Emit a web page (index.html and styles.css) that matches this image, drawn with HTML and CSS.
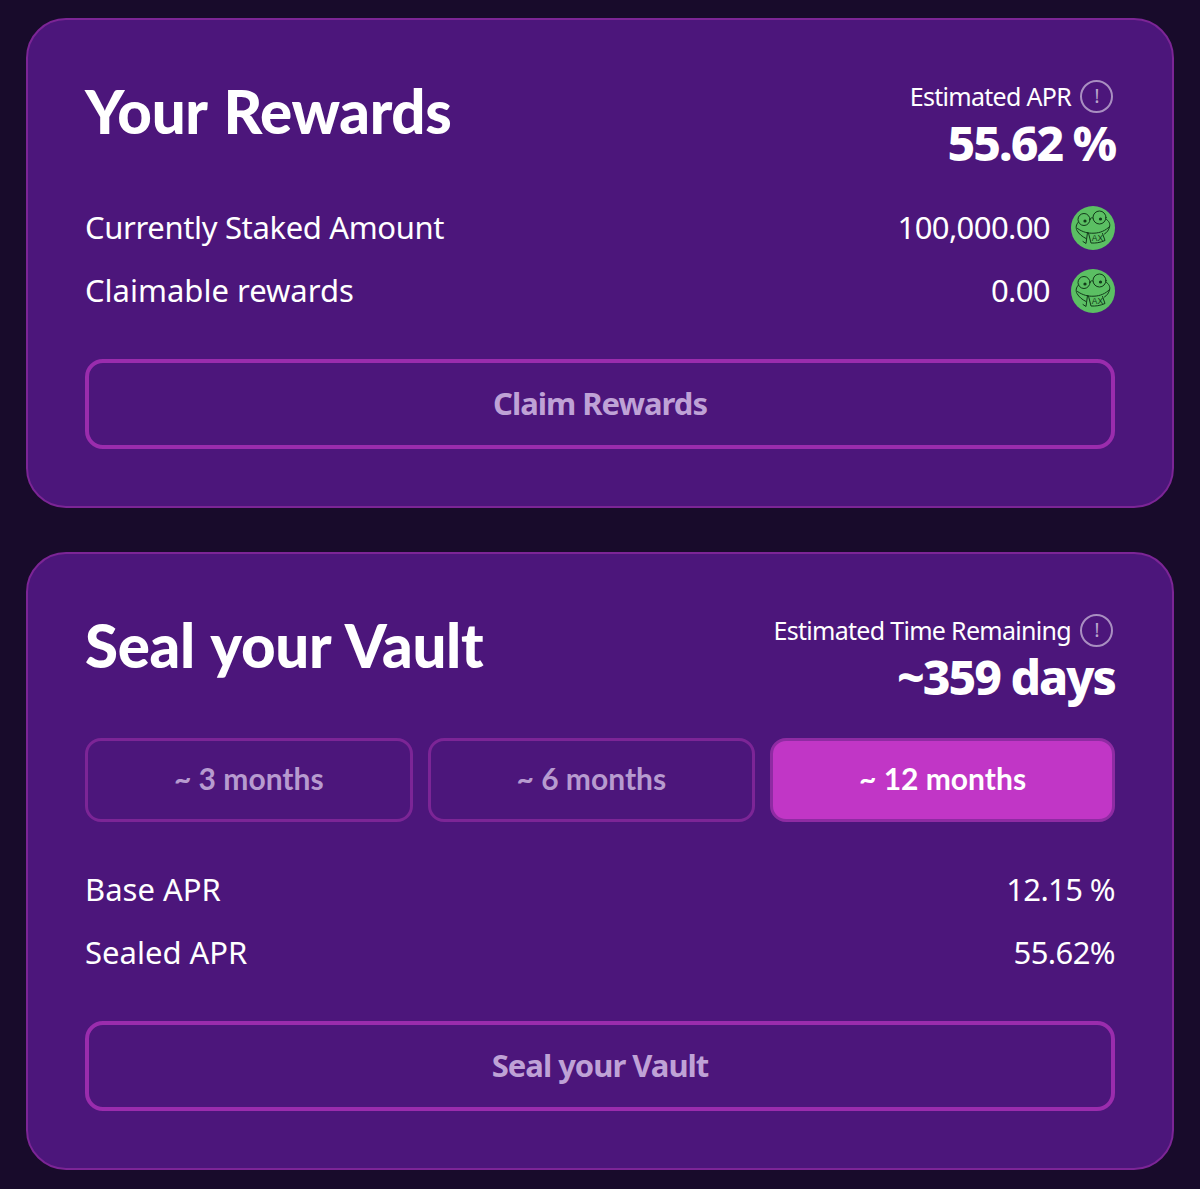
FILE: index.html
```html
<!DOCTYPE html>
<html lang="en">
<head>
<meta charset="utf-8">
<title>Your Rewards</title>
<link rel="stylesheet" href="styles.css">
</head>
<body>
<svg class="defs" width="0" height="0" aria-hidden="true">
  <defs>
    <symbol id="frog" viewBox="0 0 44 44">
      <circle cx="22" cy="22" r="22" fill="#5bbf63"/>
      <g fill="none" stroke="#123a1a" stroke-width="1" stroke-linecap="round" stroke-linejoin="round">
        <circle cx="13" cy="13.500" r="6"/>
        <circle cx="28.500" cy="11.500" r="6.500"/>
        <path d="M19 13c.8-1.200 1.800-1.500 3-1"/>
        <path d="M7.500 16C5 18.500 4.500 21.500 6 24.500c2 3.500 5 6 9 8"/>
        <path d="M35 13c3 2 4.500 5 3.500 8-.8 3-2.500 5.500-5 7"/>
        <path d="M6.500 22.500c5 3.600 10.500 5 16.500 4.700 6-.3 11.500-2.400 15.500-6.700"/>
        <path d="M16.500 26.500l-1.500 11-3-2"/>
        <path d="M17.500 27l2.500 10c4.500.3 9-.3 14-2.500l-2.500-7"/>
      </g>
      <circle cx="14" cy="15" r="1.600" fill="#123a1a"/>
      <circle cx="29.500" cy="13" r="1.600" fill="#123a1a"/>
      <text class="frog-text" x="26.500" y="35">AX</text>
    </symbol>
  </defs>
</svg>
<main class="page">
  <section class="card">
    <header class="card-head">
      <h1 class="title">Your Rewards</h1>
      <div class="stat">
        <div class="stat-label">
          <span>Estimated APR</span>
          <span class="info">!</span>
        </div>
        <div class="stat-value">55.62 %</div>
      </div>
    </header>
    <div class="rows rows-rewards">
      <div class="row">
        <span class="label-tight">Currently Staked Amount</span>
        <span class="amount">100,000.00<svg class="token"><use href="#frog"/></svg></span>
      </div>
      <div class="row">
        <span>Claimable rewards</span>
        <span class="amount">0.00<svg class="token"><use href="#frog"/></svg></span>
      </div>
    </div>
    <button class="action" type="button">Claim Rewards</button>
  </section>

  <section class="card">
    <header class="card-head">
      <h2 class="title">Seal your Vault</h2>
      <div class="stat">
        <div class="stat-label">
          <span>Estimated Time Remaining</span>
          <span class="info">!</span>
        </div>
        <div class="stat-value">~359 days</div>
      </div>
    </header>
    <div class="tabs">
      <button class="tab" type="button">~ 3 months</button>
      <button class="tab" type="button">~ 6 months</button>
      <button class="tab tab-active" type="button">~ 12 months</button>
    </div>
    <div class="rows rows-seal">
      <div class="row"><span>Base APR</span><span class="figure">12.15 %</span></div>
      <div class="row"><span>Sealed APR</span><span class="figure">55.62%</span></div>
    </div>
    <button class="action" type="button">Seal your Vault</button>
  </section>
</main>
</body>
</html>
```

FILE: styles.css
```css
* { box-sizing: border-box; }
html, body { margin: 0; padding: 0; }
body {
  background: #180b2b;
  color: #fff;
  font-family: "Noto Sans", "Liberation Sans", sans-serif;
  height: 1189px;
  overflow: hidden;
}
.defs { position: absolute; }
.page {
  display: flex;
  flex-direction: column;
  gap: 44px;
  padding: 18px 26px 0;
}
.card {
  background: #4c167b;
  border: 2px solid #7c2596;
  border-radius: 40px;
  padding: 57px;
}
.card-head {
  display: flex;
  justify-content: space-between;
  align-items: flex-start;
  height: 127px;
}
.title {
  margin: -3px 0 0;
  font-family: "Lato", sans-serif;
  font-size: 60px;
  line-height: 74px;
  font-weight: 900;
  letter-spacing: -0.300px;
  word-spacing: 3px;
}
.stat {
  display: flex;
  flex-direction: column;
  align-items: flex-end;
  margin-top: 1px;
}
.stat-label {
  display: flex;
  align-items: center;
  gap: 9px;
  font-size: 25px;
  line-height: 36px;
  letter-spacing: -0.700px;
}
.info {
  display: flex;
  align-items: center;
  justify-content: center;
  width: 33px;
  height: 33px;
  margin-right: 2px;
  border: 2px solid #a98fc1;
  border-radius: 50%;
  font-size: 20px;
  color: #b9a4cc;
  font-weight: 400;
}
.stat-value {
  font-size: 48px;
  line-height: 58px;
  font-weight: 800;
  letter-spacing: -2px;
}
.rows {
  display: flex;
  flex-direction: column;
  gap: 19px;
  font-size: 31px;
}
.row {
  display: flex;
  justify-content: space-between;
  align-items: center;
  height: 44px;
}
.label-tight { letter-spacing: -0.350px; }
.amount,
.figure { letter-spacing: -0.600px; }
.amount {
  display: flex;
  align-items: center;
  gap: 21px;
}
.token { width: 44px; height: 44px; flex: none; margin-top: 2px; }
.frog-text {
  font-family: "Liberation Sans", sans-serif;
  font-size: 8.500px;
  font-weight: 400;
  letter-spacing: 0;
  fill: #123a1a;
  text-anchor: middle;
}
.rows-rewards { margin: 1px 0 47px; }
.action {
  display: block;
  width: 100%;
  height: 90px;
  padding: 0 0 2px;
  background: transparent;
  border: 4px solid #9a2cad;
  border-radius: 18px;
  color: #bfa2d6;
  font-family: inherit;
  font-size: 31px;
  font-weight: 700;
  letter-spacing: -1px;
}
.tabs {
  display: flex;
  gap: 15px;
  margin-bottom: 45px;
}
.tab {
  flex: 1 1 auto;
  height: 84px;
  padding-bottom: 6px;
  background: transparent;
  border: 3px solid #7c2596;
  border-radius: 16px;
  color: #b79bcf;
  font-family: "Lato", sans-serif;
  font-size: 30px;
  font-weight: 700;
}
.tab-active {
  background: #c136c6;
  border-color: #8f2ba3;
  color: #fff;
}
.rows-seal { margin-bottom: 47px; }
```
